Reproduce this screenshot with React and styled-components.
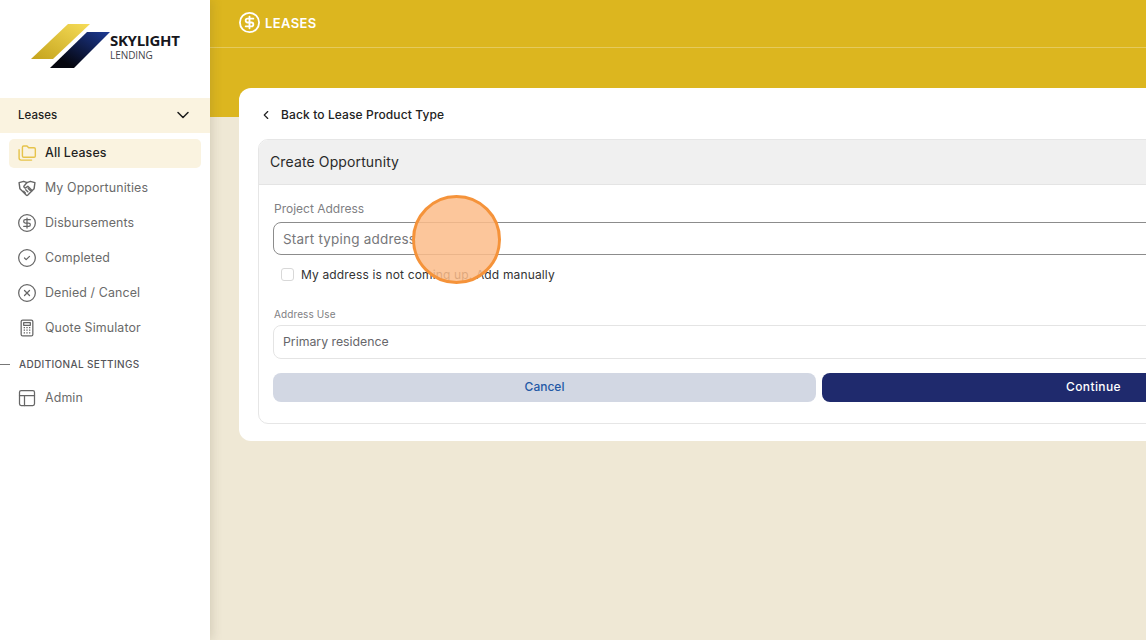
import React from 'react';
import styled, { createGlobalStyle } from 'styled-components';
import { ChevronDown, ChevronLeft, CircleCheck, CircleDollarSign, CircleX, PanelsTopLeft } from 'lucide-react';

const GlobalStyle = createGlobalStyle`
  html, body {
    margin: 0;
    height: 100%;
    overflow: hidden;
    font-family: Inter, "Open Sans", "Liberation Sans", sans-serif;
  }
  #root { height: 100%; }
  * { box-sizing: border-box; }
`;

const Page = styled.div`
  display: flex;
  width: 1146px;
  height: 640px;
  overflow: hidden;
  position: relative;
`;

const Sidebar = styled.aside`
  flex: 0 0 210px;
  background: #fff;
  box-shadow: 2px 0 10px rgba(90, 80, 50, 0.18);
  z-index: 1;
`;

const LogoBox = styled.div`
  position: relative;
  height: 98px;
`;

const LogoMark = styled.svg`
  display: block;
  width: 210px;
  height: 98px;
`;

const LogoName = styled.div`
  position: absolute;
  left: 110px;
  top: 32px;
  font-size: 15px;
  line-height: 17px;
  font-weight: 700;
  letter-spacing: -0.3px;
  color: #17171c;
  font-family: "Open Sans", sans-serif;
`;

const LogoSub = styled.div`
  position: absolute;
  left: 110px;
  top: 49px;
  font-size: 10px;
  line-height: 12px;
  letter-spacing: -0.05px;
  color: #44444a;
  font-family: "Open Sans", sans-serif;
`;

const GroupHead = styled.div`
  height: 35px;
  background: #faf3e0;
  display: flex;
  align-items: center;
  justify-content: space-between;
  padding: 0 17px 1px 18px;
  font-size: 11.5px;
  letter-spacing: 0.05px;
  font-weight: 500;
  color: #1c1c1c;
`;

const NavList = styled.nav`
  display: flex;
  flex-direction: column;
  gap: 6px;
  padding: 6px 9px 0;
`;

const NavItem = styled.a`
  height: 29px;
  display: flex;
  align-items: center;
  gap: 8px;
  padding: 0 0 2px 8px;
  border-radius: 5px;
  font-size: 12.4px;
  letter-spacing: 0.12px;
  font-weight: ${(p) => (p.$active ? 500 : 400)};
  background: ${(p) => (p.$active ? '#faf3e0' : 'transparent')};
  color: ${(p) => (p.$active ? '#1f1f1f' : '#6a6a6a')};
  svg {
    flex: 0 0 20px;
    color: ${(p) => (p.$active ? '#e6c34a' : '#666')};
  }
`;

const SectionLabel = styled.div`
  display: flex;
  align-items: center;
  gap: 9px;
  height: 30px;
  margin: 0 0 -1px -9px;
  font-size: 10px;
  font-weight: 500;
  letter-spacing: 0.35px;
  color: #55555a;
  &::before {
    content: '';
    width: 10px;
    height: 1px;
    background: #777;
  }
`;

const Main = styled.main`
  flex: 1;
  min-width: 0;
  background: linear-gradient(#dcb61f 0 117px, #efe8d5 117px);
`;

const TopBar = styled.header`
  height: 48px;
  display: flex;
  align-items: center;
  gap: 4px;
  padding: 0 0 2px 28px;
  border-bottom: 1px solid rgba(255, 255, 255, 0.28);
  color: #fff;
  font-size: 13px;
  font-weight: 600;
  letter-spacing: 0.4px;
`;

const Card = styled.section`
  width: 1160px;
  height: 353px;
  margin: 40px 0 0 29px;
  padding: 0 19px;
  background: #fff;
  border-radius: 12px;
`;

const BackRow = styled.div`
  height: 51px;
  display: flex;
  align-items: center;
  gap: 8px;
  padding: 2px 0 0 1px;
  font-size: 12px;
  letter-spacing: 0.12px;
  font-weight: 500;
  color: #222;
`;

const FormBox = styled.div`
  height: 285px;
  border: 1px solid #e6e6e6;
  border-radius: 10px;
  overflow: hidden;
`;

const FormHead = styled.div`
  height: 45px;
  display: flex;
  align-items: center;
  padding: 0 0 2px 11px;
  background: #f0f0f0;
  border-bottom: 1px solid #e4e4e4;
  font-size: 14px;
  letter-spacing: 0.12px;
  font-weight: 400;
  color: #2a2a2a;
`;

const FormBody = styled.div`
  padding: 16px 14px 0;
`;

const FieldLabel = styled.label`
  display: block;
  padding-left: 1px;
  font-size: ${(p) => p.$size || 12}px;
  letter-spacing: ${(p) => p.$spacing || 0}px;
  line-height: 15px;
  color: #808083;
`;

const Field = styled.div`
  display: flex;
  align-items: center;
  height: ${(p) => p.$height}px;
  margin-top: ${(p) => p.$top}px;
  padding: ${(p) => (p.$raised ? '0 0 1px 9px' : '0 0 0 9px')};
  border: 1px solid ${(p) => p.$border};
  border-radius: 8px;
  background: #fff;
  font-size: ${(p) => p.$size}px;
  letter-spacing: ${(p) => p.$spacing || 0}px;
  color: ${(p) => p.$color};
`;

const CheckRow = styled.div`
  display: flex;
  align-items: center;
  gap: 7px;
  margin: 12px 0 25px 8px;
  height: 15px;
  font-size: 12px;
  letter-spacing: 0.15px;
  color: #333;
`;

const CheckBox = styled.span`
  width: 13px;
  height: 13px;
  border: 1px solid #d8d8d8;
  border-radius: 3px;
`;

const Buttons = styled.div`
  display: flex;
  gap: 6px;
  margin-top: 14px;
`;

const Button = styled.button`
  flex: 1;
  height: 29px;
  padding: 0 0 2px;
  border: 0;
  border-radius: 8px;
  font: inherit;
  font-size: 12px;
  font-weight: 500;
  letter-spacing: ${(p) => (p.$primary ? 0.4 : 0)}px;
  background: ${(p) => (p.$primary ? '#1f2a6d' : '#d2d7e3')};
  color: ${(p) => (p.$primary ? '#fff' : '#2459a6')};
`;

const ClickMark = styled.div`
  position: absolute;
  left: 412px;
  top: 195px;
  width: 89px;
  height: 89px;
  border-radius: 50%;
  background: rgba(252, 188, 137, 0.85);
  border: 3px solid #f5933a;
  z-index: 2;
`;

const FolderIcon = ({ size }) => (
  <svg width={size} height={size} viewBox="0 0 24 24" fill="none" stroke="currentColor" strokeWidth="1.7" strokeLinejoin="round" strokeLinecap="round">
    <path d="M6.5 6V5a1.5 1.5 0 0 1 1.5-1.5h4l2 2.2h6.5A1.5 1.5 0 0 1 22 7.2v8.3a1.5 1.5 0 0 1-1.5 1.5H8A1.5 1.5 0 0 1 6.5 15.5z" />
    <path d="M2.5 8v10a2.5 2.5 0 0 0 2.5 2.5h12.5" />
  </svg>
);

const DealIcon = ({ size }) => (
  <svg width={size} height={size} viewBox="0 0 24 24" fill="none" stroke="currentColor" strokeWidth="1.7" strokeLinejoin="round" strokeLinecap="round">
    <path d="M2.5 5.5 8 4l4 1.5L16 4l5.5 1.5-1 7.5L13 20.5a1.5 1.5 0 0 1-2 0L3.5 13z" />
    <path d="m12 5.5-3.5 4a1.5 1.5 0 0 0 2.2 2l2.3-1.5 5 5" />
    <path d="m8 16 2 2M10.5 14l2.5 2.5M13.5 12.5l2.5 2.5" />
  </svg>
);

const CalcIcon = ({ size }) => (
  <svg width={size} height={size} viewBox="0 0 24 24" fill="none" stroke="currentColor" strokeWidth="1.5" strokeLinejoin="round">
    <rect x="5" y="2.5" width="14" height="19" rx="1.8" />
    <rect x="8" y="5.5" width="8" height="3.2" />
    <path strokeWidth="1.7" d="M8 11.5h1.6M11.2 11.5h1.6M14.4 11.5H16M8 14.5h1.6M11.2 14.5h1.6M14.4 14.5H16M8 17.8h1.6M11.2 17.8h1.6M14.4 17.8H16" />
  </svg>
);

const navItems = [
  { label: 'All Leases', icon: FolderIcon, active: true },
  { label: 'My Opportunities', icon: DealIcon },
  { label: 'Disbursements', icon: CircleDollarSign },
  { label: 'Completed', icon: CircleCheck },
  { label: 'Denied / Cancel', icon: CircleX },
  { label: 'Quote Simulator', icon: CalcIcon },
];

function Logo() {
  return (
    <LogoBox>
      <LogoMark viewBox="0 0 210 98">
        <defs>
          <linearGradient id="gold" x1="0" y1="1" x2="1" y2="0">
            <stop offset="0" stopColor="#c4a31c" />
            <stop offset="1" stopColor="#f6dc58" />
          </linearGradient>
          <linearGradient id="navy" x1="0" y1="1" x2="1" y2="0">
            <stop offset="0.2" stopColor="#05060f" />
            <stop offset="1" stopColor="#1d3a94" />
          </linearGradient>
        </defs>
        <polygon points="31,59 68,24 90,24 53,59" fill="url(#gold)" />
        <polygon points="50,68 87,32 110,32 74,68" fill="url(#navy)" />
      </LogoMark>
      <LogoName>SKYLIGHT</LogoName>
      <LogoSub>LENDING</LogoSub>
    </LogoBox>
  );
}

export default function App() {
  return (
    <Page>
      <GlobalStyle />
      <Sidebar>
        <Logo />
        <GroupHead>
          Leases
          <ChevronDown size={20} strokeWidth={1.8} />
        </GroupHead>
        <NavList>
          {navItems.map((item) => (
            <NavItem key={item.label} $active={item.active}>
              <item.icon size={20} strokeWidth={1.5} />
              {item.label}
            </NavItem>
          ))}
          <SectionLabel>ADDITIONAL SETTINGS</SectionLabel>
          <NavItem>
            <PanelsTopLeft size={20} strokeWidth={1.5} />
            Admin
          </NavItem>
        </NavList>
      </Sidebar>
      <Main>
        <TopBar>
          <CircleDollarSign size={23} strokeWidth={1.9} />
          LEASES
        </TopBar>
        <Card>
          <BackRow>
            <ChevronLeft size={14} strokeWidth={2} />
            Back to Lease Product Type
          </BackRow>
          <FormBox>
            <FormHead>Create Opportunity</FormHead>
            <FormBody>
              <FieldLabel>Project Address</FieldLabel>
              <Field $height={33} $top={6} $border="#8c8c8c" $color="#77777a" $size={13.5} $spacing={0.2}>
                Start typing address
              </Field>
              <CheckRow>
                <CheckBox />
                My address is not coming up. Add manually
              </CheckRow>
              <FieldLabel $size={10} $spacing={0.1}>Address Use</FieldLabel>
              <Field $raised $height={34} $top={3} $border="#e4e4e4" $color="#66666a" $size={12.3}>
                Primary residence
              </Field>
              <Buttons>
                <Button>Cancel</Button>
                <Button $primary>Continue</Button>
              </Buttons>
            </FormBody>
          </FormBox>
        </Card>
      </Main>
      <ClickMark />
    </Page>
  );
}
